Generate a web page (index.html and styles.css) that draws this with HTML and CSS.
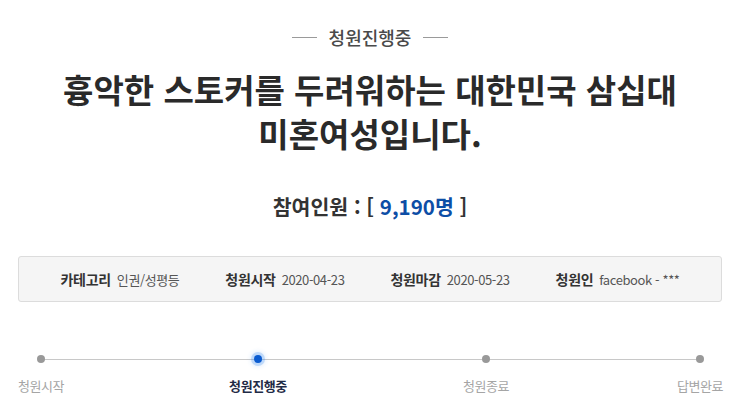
FILE: index.html
```html
<!DOCTYPE html>
<html lang="ko">
<head>
<meta charset="utf-8">
<title>청원진행중</title>
<link rel="stylesheet" href="styles.css">
</head>
<body>
<div class="page">
  <div class="status"><span class="status-text">청원진행중</span></div>
  <h1 class="title">흉악한 스토커를 두려워하는 대한민국 삼십대<br>미혼여성입니다.</h1>
  <p class="count">참여인원 : [ <span class="count-num">9,190명</span> ]</p>
  <ul class="info">
    <li class="info-item"><strong class="info-label">카테고리</strong><span class="info-value">인권/성평등</span></li>
    <li class="info-item"><strong class="info-label">청원시작</strong><span class="info-value">2020-04-23</span></li>
    <li class="info-item"><strong class="info-label">청원마감</strong><span class="info-value">2020-05-23</span></li>
    <li class="info-item"><strong class="info-label">청원인</strong><span class="info-value">facebook - ***</span></li>
  </ul>
  <ol class="steps">
    <li class="step"><span class="dot"></span><span class="step-label">청원시작</span></li>
    <li class="step step-active"><span class="dot"></span><span class="step-label">청원진행중</span></li>
    <li class="step"><span class="dot"></span><span class="step-label">청원종료</span></li>
    <li class="step"><span class="dot"></span><span class="step-label">답변완료</span></li>
  </ol>
</div>
</body>
</html>
```

FILE: styles.css
```css
* { box-sizing: border-box; }
html, body { margin: 0; padding: 0; background: #fff; }
body {
  font-family: "Noto Sans CJK KR", "Noto Sans", sans-serif;
  color: #333;
}
.page {
  width: 745px;
  height: 410px;
  overflow: hidden;
  display: flex;
  flex-direction: column;
  align-items: center;
  padding-right: 5px;
}
.status {
  margin-top: 26px;
  display: flex;
  align-items: center;
  gap: 12px;
  font-size: 18px;
  line-height: 22px;
  font-weight: 500;
  color: #4a4a4a;
}
.status::before, .status::after {
  content: "";
  display: block;
  width: 25px;
  height: 1px;
  background: #9a9a9a;
}
.title {
  margin: 19px 0 0;
  font-size: 33px;
  line-height: 44px;
  font-weight: 700;
  color: #2a2a2a;
  text-align: center;
  letter-spacing: 0;
}
.count {
  margin: 37px 0 0;
  font-size: 20.5px;
  line-height: 28px;
  font-weight: 700;
  color: #333;
}
.count-num { color: #0d4ea6; }
.info {
  list-style: none;
  margin: 36px 0 0;
  padding: 0;
  width: 704px;
  height: 46px;
  border: 1px solid #dcdcdc;
  border-radius: 3px;
  background: #f5f5f5;
  display: flex;
  justify-content: center;
  align-items: center;
  gap: 46px;
  font-size: 13px;
  letter-spacing: -0.4px;
}
.info-item { display: flex; align-items: baseline; gap: 6px; }
.info-label { font-weight: 700; color: #333; font-size: 14px; letter-spacing: -0.3px; }
.info-value { color: #555; }
.steps {
  list-style: none;
  margin: 50px 0 0 5px;
  padding: 0;
  width: 745px;
  display: flex;
  position: relative;
}
.steps::before {
  content: "";
  position: absolute;
  left: 41px;
  right: 45px;
  top: 7px;
  height: 1px;
  background: #c8c8c8;
}
.step {
  width: 82px;
  display: flex;
  flex-direction: column;
  align-items: center;
  gap: 10px;
  position: relative;
}
.step:nth-child(2) { margin-left: 135px; }
.step:nth-child(3) { margin-left: 146px; }
.step:nth-child(4) { margin-left: 132px; }
.dot {
  width: 14px;
  height: 14px;
  display: flex;
  align-items: center;
  justify-content: center;
}
.dot::before {
  content: "";
  width: 8px;
  height: 8px;
  border-radius: 50%;
  background: #999;
}
.step-active .dot::before {
  background: #0a5bd0;
  box-shadow: 0 0 0 3px rgba(60, 140, 240, 0.25), 0 0 4px 4px rgba(60, 140, 240, 0.12);
}
.step-label {
  font-size: 13px;
  line-height: 20px;
  color: #a5a5a5;
  letter-spacing: -0.4px;
  white-space: nowrap;
}
.step-active .step-label {
  font-weight: 700;
  color: #1f2b46;
}
```
